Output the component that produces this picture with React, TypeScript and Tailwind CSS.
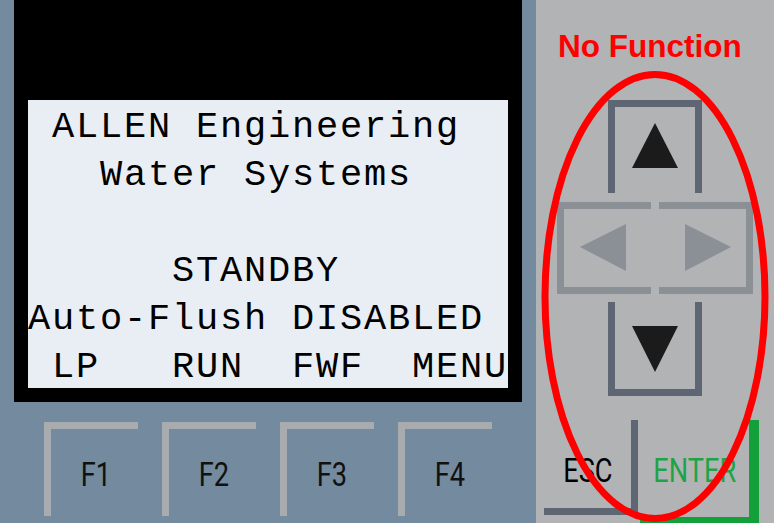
const lcdRows = [
  ' ALLEN Engineering',
  '   Water Systems',
  '',
  '      STANDBY',
  'Auto-Flush DISABLED',
  ' LP   RUN  FWF  MENU',
];

const fKeys = ['F1', 'F2', 'F3', 'F4'];

function KeyLabel({ text, className = '' }: { text: string; className?: string }) {
  return (
    <span
      className={`inline-block origin-center scale-x-[0.8] font-['Roboto',sans-serif] text-[34px] leading-none ${className}`}
    >
      {text}
    </span>
  );
}

function Tri({ dir, color }: { dir: 'up' | 'down' | 'left' | 'right'; color: string }) {
  const pts = {
    up: '23,0 46,45 0,45',
    down: '0,0 46,0 23,46',
    left: '0,23 46,0 46,47',
    right: '0,0 46,23 0,47',
  }[dir];
  return (
    <svg width="46" height="47" viewBox="0 0 46 47" className="block">
      <polygon points={pts} fill={color} />
    </svg>
  );
}

export default function App() {
  return (
    <div className="flex h-[523px] w-[774px] overflow-hidden">
      {/* display + function keys */}
      <div className="w-[536px] bg-[#738a9f] px-[14px]">
        <div className="h-[402px] bg-black px-[14px] pt-[100px]">
          <div className="h-[288px] overflow-hidden bg-[#e9eef4] pt-[3px] font-['Liberation_Mono',monospace] text-[37px] tracking-[1.8px] text-black">
            {lcdRows.map((row, i) => (
              <div key={i} className="h-[48px] whitespace-pre leading-[48px]">
                {row}
              </div>
            ))}
          </div>
        </div>
        <div className="mt-[20px] flex gap-[24px] pl-[30px]">
          {fKeys.map((k) => (
            <div
              key={k}
              className="flex h-[94px] w-[94px] items-center justify-center border-l-[7px] border-t-[7px] border-[#a9acaf] pl-[3px] pt-[2px] text-[#111]"
            >
              <KeyLabel text={k} />
            </div>
          ))}
        </div>
      </div>

      {/* navigation keypad */}
      <div className="relative h-[523px] w-[238px] overflow-hidden bg-[#b1b3b5]">
        <div className="pl-[22px] pt-[31px] font-['Liberation_Sans',Arial,sans-serif] text-[31.5px] font-bold leading-none text-[#ff0000]">
          No Function
        </div>

        <div className="ml-[21px] mt-[37px] flex w-[196px] flex-col items-center">
          <div className="flex h-[93px] w-[94px] justify-center border-x-[7px] border-t-[7px] border-[#5e6673] pt-[16px]">
            <Tri dir="up" color="#1b1b1b" />
          </div>
          <div className="mt-[9px] flex gap-[8px]">
            <div className="flex h-[92px] w-[94px] items-center border-y-[7px] border-l-[7px] border-[#8a9096] pl-[16px]">
              <Tri dir="left" color="#8a9096" />
            </div>
            <div className="flex h-[92px] w-[94px] items-center border-y-[7px] border-r-[7px] border-[#8a9096] pl-[26px]">
              <Tri dir="right" color="#8a9096" />
            </div>
          </div>
          <div className="mt-[8px] flex h-[94px] w-[94px] justify-center border-x-[7px] border-b-[7px] border-[#5e6673] pt-[24px]">
            <Tri dir="down" color="#1b1b1b" />
          </div>
        </div>

        <div className="mt-[24px] flex gap-[2px] pl-[8px]">
          <div className="flex h-[95px] w-[94px] justify-center border-b-[7px] border-r-[7px] border-[#5e6673] pt-[33px] text-black">
            <KeyLabel text="ESC" />
          </div>
          <div className="flex h-[107px] w-[119px] justify-center border-b-[10px] border-r-[10px] border-[#13a03b] pt-[33px] text-[#1ea345]">
            <KeyLabel text="ENTER" />
          </div>
        </div>

        <svg className="pointer-events-none absolute inset-0" width="238" height="523" viewBox="0 0 238 523">
          <ellipse cx="119" cy="296.5" rx="110" ry="222" fill="none" stroke="#ff0000" strokeWidth="7" />
        </svg>
      </div>
    </div>
  );
}
